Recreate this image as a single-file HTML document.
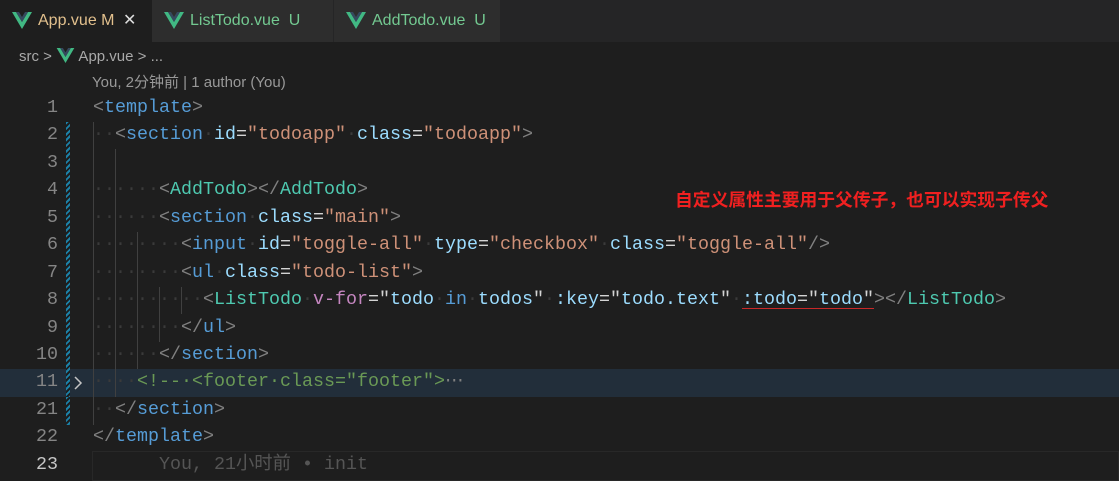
<!DOCTYPE html>
<html><head><meta charset="utf-8"><style>
body{margin:0;width:1119px;height:474px;background:#1e1e1e;overflow:hidden;position:relative;font-family:"Liberation Sans","Noto Sans CJK SC",sans-serif}
.tabs{position:absolute;left:0;top:0;width:1119px;height:42px;background:#252526}
.tab{position:absolute;top:0;height:42px;background:#2d2d2d;border-right:1px solid #252526;font-size:16px;line-height:42px;color:#73c991}
.tab.a{background:#1e1e1e;color:#e2c08d}
.tab svg{position:absolute;left:12px;top:12px}
.tab span{position:absolute;left:38px;white-space:nowrap}
.bc{position:absolute;left:19px;top:46px;font-size:15px;color:#a9a9a9;line-height:22px;white-space:nowrap}
.lens{position:absolute;left:92px;top:73px;font-size:15px;color:#999;line-height:20px}
.ln{position:absolute;left:0;width:58px;text-align:right;font-family:"Liberation Mono",monospace;font-size:18.33px;color:#858585}
.code{position:absolute;left:93px;font-family:"Liberation Mono",monospace;font-size:18.33px;color:#d4d4d4}
.row{height:27.45px;line-height:27.45px;white-space:pre}
.d{color:#3a3a3a}.p{color:#808080}.t{color:#569cd6}.at{color:#9cdcfe}.s{color:#ce9178}.c{color:#4ec9b0}.v{color:#c586c0}.cm{color:#6a9955}
.g{position:absolute;width:1px;background:#404040}
.gut{position:absolute;left:66px;width:4px;background:repeating-linear-gradient(135deg,#1b81a8 0 2px,#1e1e1e 2px 4px)}
</style></head><body>
<div class="tabs">
 <div class="tab a" style="left:0;width:152px"><svg width="20" height="17" viewBox="0 0 20 17"><path d="M0 0h4l6 10 6-10h4L10 17z" fill="#41b883"/><path d="M4 0h3l3 5 3-5h3l-6 10z" fill="#35495e"/></svg><span>App.vue M <span style="position:static;color:#ddd;margin-left:4px">✕</span></span></div>
 <div class="tab" style="left:152px;width:181px"><svg width="20" height="17" viewBox="0 0 20 17"><path d="M0 0h4l6 10 6-10h4L10 17z" fill="#41b883"/><path d="M4 0h3l3 5 3-5h3l-6 10z" fill="#35495e"/></svg><span>ListTodo.vue&nbsp; U</span></div>
 <div class="tab" style="left:334px;width:166px"><svg width="20" height="17" viewBox="0 0 20 17"><path d="M0 0h4l6 10 6-10h4L10 17z" fill="#41b883"/><path d="M4 0h3l3 5 3-5h3l-6 10z" fill="#35495e"/></svg><span>AddTodo.vue&nbsp; U</span></div>
</div>
<div class="bc">src &gt; <svg width="19" height="15" viewBox="0 0 20 17" style="vertical-align:-2px"><path d="M0 0h4l6 10 6-10h4L10 17z" fill="#41b883"/><path d="M4 0h3l3 5 3-5h3l-6 10z" fill="#35495e"/></svg> App.vue &gt; ...</div>
<div class="lens">You, 2分钟前 | 1 author (You)</div>
<div style="position:absolute;left:0;top:369px;width:1119px;height:28px;background:#222e3a"></div>
<div style="position:absolute;left:92px;top:451px;width:1027px;height:30px;border:1px solid #282828;box-sizing:border-box"></div>
<div class="gut" style="top:122px;height:275px"></div>
<div class="gut" style="top:397px;height:28px"></div>
<div class="g" style="left:93px;top:122px;height:303px"></div>
<div class="g" style="left:115px;top:149px;height:248px"></div>
<div class="g" style="left:137px;top:232px;height:137px"></div>
<div class="g" style="left:159px;top:287px;height:55px"></div>
<div class="g" style="left:181px;top:287px;height:27px"></div>
<div class="ln" style="top:94px"><div class="row">1</div><div class="row">2</div><div class="row">3</div><div class="row">4</div><div class="row">5</div><div class="row">6</div><div class="row">7</div><div class="row">8</div><div class="row">9</div><div class="row">10</div><div class="row">11</div><div class="row">21</div><div class="row">22</div><div class="row" style="color:#c6c6c6">23</div></div>
<svg style="position:absolute;left:73px;top:376px" width="10" height="14" viewBox="0 0 10 14"><path d="M2 1l6 6-6 6" fill="none" stroke="#c5c5c5" stroke-width="1.5"/></svg>
<div class="code" style="top:94px">
<div class="row"><span class="p">&lt;</span><span class="t">template</span><span class="p">&gt;</span></div>
<div class="row"><span class="d">··</span><span class="p">&lt;</span><span class="t">section</span><span class="d">·</span><span class="at">id</span>=<span class="s">"todoapp"</span><span class="d">·</span><span class="at">class</span>=<span class="s">"todoapp"</span><span class="p">&gt;</span></div>
<div class="row"> </div>
<div class="row"><span class="d">······</span><span class="p">&lt;</span><span class="c">AddTodo</span><span class="p">&gt;&lt;/</span><span class="c">AddTodo</span><span class="p">&gt;</span></div>
<div class="row"><span class="d">······</span><span class="p">&lt;</span><span class="t">section</span><span class="d">·</span><span class="at">class</span>=<span class="s">"main"</span><span class="p">&gt;</span></div>
<div class="row"><span class="d">········</span><span class="p">&lt;</span><span class="t">input</span><span class="d">·</span><span class="at">id</span>=<span class="s">"toggle-all"</span><span class="d">·</span><span class="at">type</span>=<span class="s">"checkbox"</span><span class="d">·</span><span class="at">class</span>=<span class="s">"toggle-all"</span><span class="p">/&gt;</span></div>
<div class="row"><span class="d">········</span><span class="p">&lt;</span><span class="t">ul</span><span class="d">·</span><span class="at">class</span>=<span class="s">"todo-list"</span><span class="p">&gt;</span></div>
<div class="row"><span class="d">··········</span><span class="p">&lt;</span><span class="c">ListTodo</span><span class="d">·</span><span class="v">v-for</span>="<span class="at">todo</span><span class="d">·</span><span class="t">in</span><span class="d">·</span><span class="at">todos</span>"<span class="d">·</span><span class="at">:key</span>="<span class="at">todo.text</span>"<span class="d">·</span><span style="text-decoration:underline;text-decoration-color:#c82828;text-underline-offset:4px"><span class="at">:todo</span>="<span class="at">todo</span>"</span><span class="p">&gt;&lt;/</span><span class="c">ListTodo</span><span class="p">&gt;</span></div>
<div class="row"><span class="d">········</span><span class="p">&lt;/</span><span class="t">ul</span><span class="p">&gt;</span></div>
<div class="row"><span class="d">······</span><span class="p">&lt;/</span><span class="t">section</span><span class="p">&gt;</span></div>
<div class="row"><span class="d">····</span><span class="cm">&lt;!--·&lt;footer·class="footer"&gt;</span><span class="p">⋯</span></div>
<div class="row"><span class="d">··</span><span class="p">&lt;/</span><span class="t">section</span><span class="p">&gt;</span></div>
<div class="row"><span class="p">&lt;/</span><span class="t">template</span><span class="p">&gt;</span></div>
<div class="row" style="color:#555">      You, 21小时前 • init</div>
</div>
<div style="position:absolute;left:675px;top:186px;color:#f02020;font-weight:bold;font-size:17.8px;font-family:'Noto Sans CJK SC',sans-serif;white-space:nowrap">自定义属性主要用于父传子，也可以实现子传父</div>
</body></html>
